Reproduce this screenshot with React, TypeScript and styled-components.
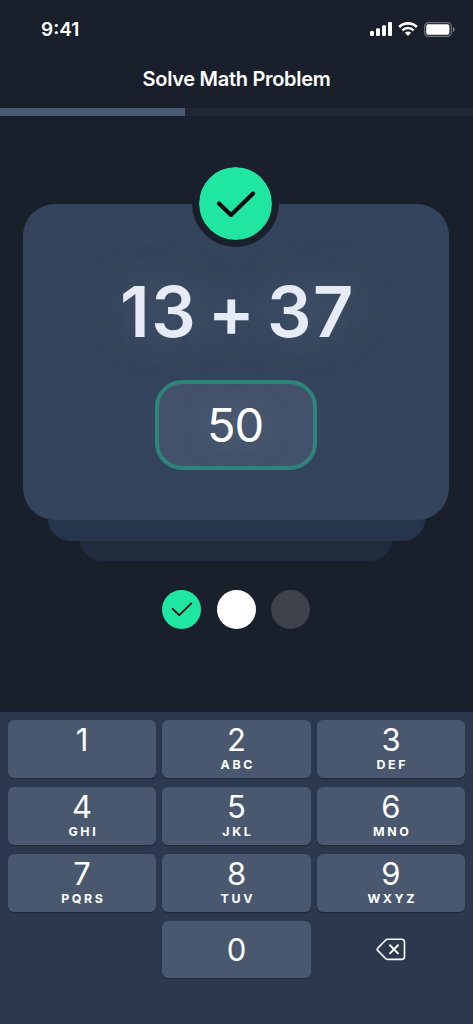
import { useState } from "react";
import styled, { createGlobalStyle } from "styled-components";

// ================================================
//              Components
// ================================================
const GlobalStyle = createGlobalStyle`
  * {
    box-sizing: border-box;
  }
  body {
    margin: 0;
    background-color: #1a1f2c;
  }
  button {
    font: inherit;
    color: inherit;
    border: none;
    padding: 0;
    background: none;
  }
`;
const Screen = styled.div`
  width: 100%;
  height: 1024px;
  display: flex;
  flex-direction: column;
  overflow: hidden;
  background-color: #1a1f2c;
  color: white;
  font-family: Inter, "Liberation Sans", sans-serif;
`;
const StatusBar = styled.div`
  height: 58px;
  padding: 0 18px 0 41px;
  display: flex;
  align-items: center;
  justify-content: space-between;
`;
const Time = styled.span`
  font-size: 19px;
  font-weight: 600;
  letter-spacing: 0;
`;
const Indicators = styled.div`
  display: flex;
  align-items: center;
  gap: 6px;
`;
const Title = styled.h1`
  margin: 0 0 7px;
  height: 43px;
  line-height: 43px;
  font-size: 20px;
  font-weight: 600;
  letter-spacing: -0.3px;
  text-align: center;
  white-space: nowrap;
`;
const Progress = styled.div`
  height: 8px;
  background-color: #202636;
`;
const ProgressFill = styled.div`
  height: 100%;
  background-color: #4a5a72;
`;
const Stack = styled.div`
  margin-top: 88px;
  display: flex;
  flex-direction: column;
  align-items: center;
  isolation: isolate;
`;
const Card = styled.div`
  position: relative;
  width: 426px;
  height: 316px;
  margin-right: 1px;
  padding-top: 63px;
  display: flex;
  flex-direction: column;
  align-items: center;
  z-index: 3;
  border-radius: 32px;
  background-color: #34445c;
`;
const Layer = styled.div<{ width: number; bg: string; depth: number }>`
  position: relative;
  width: ${(props) => props.width}px;
  height: 60px;
  margin: -39.5px 1px 0 0;
  z-index: ${(props) => props.depth};
  border-radius: 0 0 22px 22px;
  background-color: ${(props) => props.bg};
`;
const Badge = styled.div`
  position: absolute;
  top: -44px;
  left: 169px;
  width: 87px;
  height: 87px;
  display: flex;
  align-items: center;
  justify-content: center;
  border: 7px solid #1a1f2c;
  border-radius: 50%;
  background-color: #1fe7a1;
  background-clip: padding-box;
`;
const Problem = styled.div`
  height: 90px;
  padding-left: 3px;
  line-height: 90px;
  font-size: 70px;
  font-weight: 580;
  letter-spacing: 1.5px;
  word-spacing: -8.5px;
  white-space: nowrap;
  color: #e7ebf5;
  text-shadow: 0 0 45px rgba(150, 165, 190, 0.35);
`;
const Answer = styled.div`
  width: 162px;
  height: 90px;
  margin-top: 23px;
  padding: 0 2px 2px 0;
  display: flex;
  align-items: center;
  justify-content: center;
  border: 4px solid #2e8479;
  border-radius: 27px;
  background-color: #43526a;
  font-size: 47px;
  font-weight: 380;
  letter-spacing: -1px;
  text-shadow: 0 0 30px rgba(160, 170, 210, 0.35);
`;
const Steps = styled.div`
  margin: 28.5px 1px 0 0;
  display: flex;
  justify-content: center;
  gap: 15.5px;
`;
const Step = styled.div<{ bg: string }>`
  width: 39px;
  height: 39px;
  display: flex;
  align-items: center;
  justify-content: center;
  border-radius: 50%;
  background-color: ${(props) => props.bg};
`;
const Keyboard = styled.div`
  flex: none;
  height: 312px;
  margin-top: auto;
  padding: 8px;
  display: grid;
  grid-template-columns: repeat(3, 1fr);
  grid-auto-rows: 57.8px;
  gap: 9.1px 6.4px;
  align-content: start;
  background-color: #2c384e;
`;
const Key = styled.button<{ centered?: boolean }>`
  padding-top: ${(props) => (props.centered ? 0 : 3)}px;
  display: flex;
  flex-direction: column;
  align-items: center;
  justify-content: ${(props) => (props.centered ? "center" : "flex-start")};
  border-radius: 6px;
  background-color: #49586e;
  box-shadow: 0 1.3px 0 #202a39;
`;
const DeleteKey = styled.button`
  grid-column: 3;
  display: flex;
  align-items: center;
  justify-content: center;
`;
const Digit = styled.span`
  height: 33px;
  line-height: 33px;
  font-size: 31px;
  font-weight: 390;
`;
const Letters = styled.span`
  height: 18px;
  line-height: 18px;
  font-size: 12.4px;
  font-weight: 650;
  letter-spacing: 2.6px;
  margin-right: -2.6px;
`;

const Check = ({ size, stroke }: { size: number; stroke: number }) => (
  <svg width={size} height={size * 0.65} viewBox="0 0 40 26" fill="none">
    <path
      d="M3 12.5 L15 24 L37 2.5"
      stroke="#0a0d12"
      strokeWidth={stroke}
      strokeLinecap="round"
    />
  </svg>
);

const StatusIcons = () => (
  <Indicators>
    <svg width="22" height="14" viewBox="0 0 22 14" fill="white">
      <rect x="0" y="9" width="4" height="5" rx="1.2" />
      <rect x="6" y="6.3" width="4" height="7.7" rx="1.2" />
      <rect x="12" y="3.2" width="4" height="10.8" rx="1.2" />
      <rect x="18" y="0" width="4" height="14" rx="1.2" />
    </svg>
    <svg width="20" height="14" viewBox="0 0 20 14" fill="none">
      <path d="M1.2 5 A12.5 12.5 0 0 1 18.8 5" stroke="white" strokeWidth="2.6" />
      <path d="M4.4 8.3 A8 8 0 0 1 15.6 8.3" stroke="white" strokeWidth="2.5" />
      <path d="M6.9 10.8 A4.4 4.4 0 0 1 13.1 10.8 L10 14 Z" fill="white" />
    </svg>
    <svg width="31" height="15" viewBox="0 0 31 15" fill="none">
      <rect x="0.6" y="0.6" width="26.8" height="13.8" rx="4" stroke="#6e727b" strokeWidth="1.2" />
      <rect x="2.2" y="2.2" width="23.2" height="10.6" rx="2" fill="white" />
      <path d="M29 5 A2.7 2.7 0 0 1 29 10 Z" fill="#7b7f87" />
    </svg>
  </Indicators>
);

// ================================================
//                Math Problem
// ================================================
const keys = [
  { digit: "1", letters: "" },
  { digit: "2", letters: "ABC" },
  { digit: "3", letters: "DEF" },
  { digit: "4", letters: "GHI" },
  { digit: "5", letters: "JKL" },
  { digit: "6", letters: "MNO" },
  { digit: "7", letters: "PQRS" },
  { digit: "8", letters: "TUV" },
  { digit: "9", letters: "WXYZ" },
];

const App = () => {
  const [answer, setAnswer] = useState("50");
  const progress = 39.2;

  const onClickDigit = (digit: string) => {
    if (answer.length < 4) setAnswer(answer + digit);
  };
  const onClickDelete = () => setAnswer(answer.slice(0, -1));

  return (
    <Screen>
      <GlobalStyle />
      <StatusBar>
        <Time>9:41</Time>
        <StatusIcons />
      </StatusBar>
      <Title>Solve Math Problem</Title>
      <Progress>
        <ProgressFill style={{ width: `${progress}%` }} />
      </Progress>

      <Stack>
        <Card>
          <Badge>
            <Check size={40} stroke={4.2} />
          </Badge>
          <Problem>13 + 37</Problem>
          <Answer>{answer}</Answer>
        </Card>
        <Layer width={377} bg="#26354b" depth={2} />
        <Layer width={312} bg="#202b3d" depth={1} />
      </Stack>

      <Steps>
        <Step bg="#1fe7a1">
          <Check size={22} stroke={3.2} />
        </Step>
        <Step bg="white" />
        <Step bg="#3f424d" />
      </Steps>

      <Keyboard>
        {keys.map((key) => (
          <Key key={key.digit} onClick={() => onClickDigit(key.digit)}>
            <Digit>{key.digit}</Digit>
            <Letters>{key.letters}</Letters>
          </Key>
        ))}
        <Key centered style={{ gridColumn: 2 }} onClick={() => onClickDigit("0")}>
          <Digit>0</Digit>
        </Key>
        <DeleteKey aria-label="Delete" onClick={onClickDelete}>
          <svg width="30" height="23" viewBox="0 0 30 23" fill="none" stroke="white" strokeLinecap="round" strokeLinejoin="round">
            <path
              d="M11.5 1.2 H25.5 A3 3 0 0 1 28.5 4.2 V18.4 A3 3 0 0 1 25.5 21.4 H11.5 Q10.5 21.4 9.7 20.6 L1.6 12.4 Q0.8 11.4 1.6 10.4 L9.7 2 Q10.5 1.2 11.5 1.2 Z"
              strokeWidth="1.6"
            />
            <path d="M14 7.2 L22 15.4 M22 7.2 L14 15.4" strokeWidth="2" />
          </svg>
        </DeleteKey>
      </Keyboard>
    </Screen>
  );
};

export default App;
